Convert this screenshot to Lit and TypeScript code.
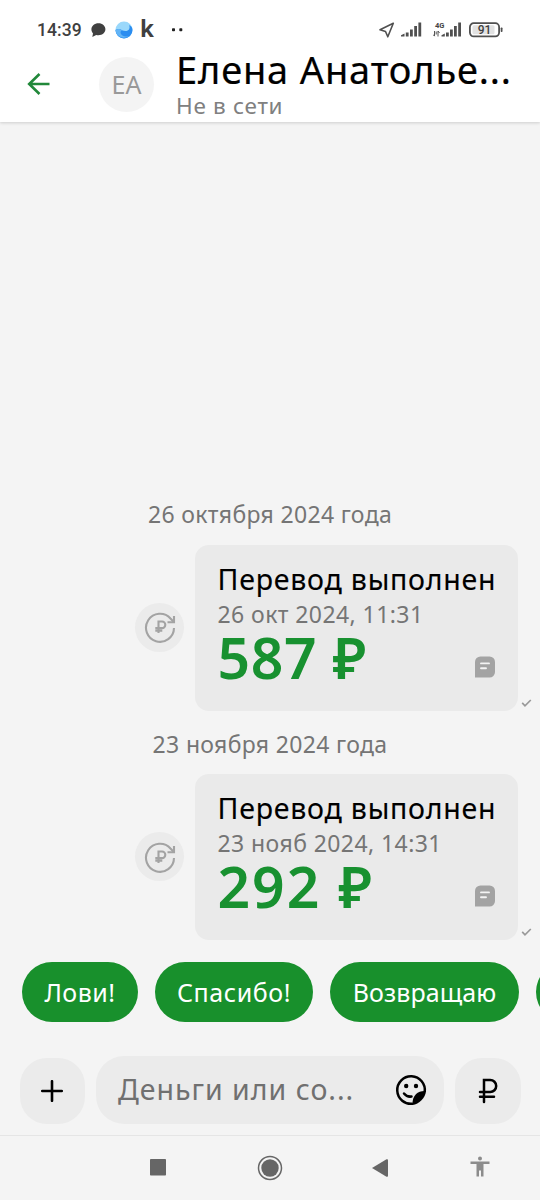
import { LitElement, html, css, svg } from "lit";
import { customElement, property } from "lit/decorators.js";

const rublePath = svg`<path d="M8 24V2h6.200a5.600 5.600 0 0 1 0 12H4M4 18.800h14"/>`;

@customElement("status-bar")
class StatusBar extends LitElement {
  static styles = css`
    :host { display: flex; height: 49px; padding-left: 37px; padding-right: 37px; box-sizing: border-box; align-items: center; color: #404040; padding-top: 11px; }
    .time { font: 500 17.5px/20px Roboto, sans-serif; width: 54px; letter-spacing: 0.1px; }
    svg { display: block; flex: none; }
    .chat { margin-right: 9px; }
    .orb { margin-right: 7px; }
    .k { font: 700 22.5px/24px "Noto Sans", sans-serif; width: 15px; margin-bottom: 3px; }
    .more { margin-left: 16px; }
    .push { margin-left: auto; margin-right: 6px; }
    .sig { margin-right: 11px; }
    .net { margin-right: 7px; }
    .num { font: 500 12px Roboto, sans-serif; }
    .tiny { font: 700 7.5px Roboto, sans-serif; }
  `;
  render() {
    return html`
      <span class="time">14:39</span>
      <svg class="chat" width="15" height="16" viewBox="0 0 15 16"><path fill="#404040" d="M7.500 1.300C11.500 1.300 14.400 4 14.400 7.200S11.500 13.200 7.500 13.200c-.9 0-1.500 0-2.300-.3L1.300 15l.7-3.600C1 10.200.4 8.900.4 7.200.4 4 3.500 1.300 7.500 1.300z"/></svg>
      <svg class="orb" width="18" height="18" viewBox="0 0 18 18">
        <circle cx="9" cy="9" r="8.500" fill="#9ad8fb"/>
        <path d="M.5 9c2-1.500 4.500-1.500 6.500.3 3 1.500 7 1 7.500-2.300.2-1.200 0-2-.5-3 2.300 1 3.500 2.800 3.500 5a8.500 8.500 0 0 1-17 0z" fill="#2b8df0"/>
        <path d="M.5 9c2-1.500 4.500-1.500 6.500.3-2 1-2 3.500.5 5.200 2 1.200 4.500 1.200 6.500.5A8.500 8.500 0 0 1 .5 9z" fill="#62b4f6"/>
      </svg>
      <span class="k">k</span>
      <svg class="more" width="13" height="4" viewBox="0 0 13 4"><rect x="1" y=".3" width="3" height="3" rx=".8" fill="#222"/><rect x="8.300" y=".3" width="3" height="3" rx=".8" fill="#222"/></svg>
      <svg class="push" width="17" height="16" viewBox="0 0 17 16"><path d="M15.300 1.300 2 7.800l5.500 1.700 2.300 5.300z" fill="none" stroke="#505050" stroke-width="1.600" stroke-linejoin="round"/></svg>
      <svg class="sig" width="21" height="16" viewBox="0 0 21 16"><path d="M0 14.500v-1.200l3.500-1.700v2.900zM4.800 10.500h2.800v4H4.800zM9 7.500h2.800v7H9zM13.200 4h2.800v10.500h-2.800zM17.400.5h2.800v14h-2.800z" fill="#505050"/></svg>
      <svg class="net" width="29" height="18" viewBox="0 0 29 18">
        <text class="tiny" x="2" y="6.800" fill="#444">4G</text>
        <path d="M1.500 10v5M0 13.500l1.500 1.700M5 15.500V10l1.500 2M3.200 10.500v3" fill="none" stroke="#555" stroke-width="1"/>
        <path d="M8.500 15.500v-1.200l3.300-1.700v2.900zM13 11.500h2.800v4H13zM17 8.500h2.800v7H17zM21 5h2.800v10.500H21zM25.200 1.500H28v14h-2.800z" fill="#505050"/>
      </svg>
      <svg width="34" height="16" viewBox="0 0 34 16">
        <rect x=".9" y="1.200" width="29.200" height="13.200" rx="3.800" fill="#fff" stroke="#505050" stroke-width="1.800"/>
        <rect x="3.500" y="3.300" width="22" height="9" rx="1.500" fill="#e2e2e2"/>
        <rect x="31.700" y="5.600" width="1.800" height="4.400" rx=".7" fill="#505050"/>
        <text class="num" x="15.500" y="12.100" text-anchor="middle" fill="#404040">91</text>
      </svg>`;
  }
}

@customElement("transfer-message")
class TransferMessage extends LitElement {
  @property() when = "";
  @property() amount = "";
  static styles = css`
    :host { display: flex; align-items: center; padding-left: 135px; height: 166px; }
    .repeat { width: 49px; height: 49px; border-radius: 50%; background: #ebebeb; display: grid; place-items: center; flex: none; margin-bottom: 1px; }
    .card { box-sizing: border-box; width: 323px; height: 166px; margin-left: 11px; background: #eaeaea; border-radius: 14px; padding: 16px 22px 0 22.5px; flex: none; }
    .title { font-size: 28.5px; line-height: 36px; color: #000; white-space: nowrap; letter-spacing: 0.78px; -webkit-text-stroke: 0.1px #000; }
    .when { font-size: 23px; line-height: 28px; margin-top: 3px; color: #757575; white-space: nowrap; letter-spacing: 0.42px; }
    .row { display: flex; justify-content: space-between; align-items: center; margin-top: -2px; height: 60px; }
    .amount { font-size: 57px; line-height: 60px; font-weight: 600; color: #189130; white-space: nowrap; letter-spacing: 0.6px; margin-top: 2px; }
    :host([wide]) .amount { letter-spacing: 2px; }
    .note { margin-top: 22px; margin-right: 1px; }
    .check { align-self: flex-end; margin: 0 0 3px 3px; flex: none; }
    svg { display: block; }
  `;
  render() {
    return html`
      <div class="repeat">
        <svg width="34" height="34" viewBox="0 0 34 34" fill="none" stroke="#a3a3a3" stroke-width="2.100">
          <path d="M31 18A14 14 0 1 1 27.500 8.500l2.800 3"/>
          <path d="M31 6v6.200h-6.500"/>
          <path d="M15.500 23V11.500h3.500a3.300 3.300 0 0 1 0 6.600h-6.700M12.300 20.600h7"/>
        </svg>
      </div>
      <div class="card">
        <div class="title">Перевод выполнен</div>
        <div class="when">${this.when}</div>
        <div class="row">
          <div class="amount">${this.amount} ₽</div>
          <svg class="note" width="20" height="22" viewBox="0 0 20 22"><path d="M0 21.500V6A5.500 5.500 0 0 1 5.500.5h9A5.500 5.500 0 0 1 20 6v10a5.500 5.500 0 0 1-5.500 5.500z" fill="#a3a3a3"/><path d="M6 7.400h8M6 12.300h5" stroke="#f4f4f4" stroke-width="1.900" stroke-linecap="round"/></svg>
        </div>
      </div>
      <svg class="check" width="11" height="10" viewBox="0 0 11 10"><path d="M1.200 4.800 4 7.800 9.800 2" fill="none" stroke="#999" stroke-width="1.700"/></svg>`;
  }
}

@customElement("app-root")
class AppRoot extends LitElement {
  static styles = css`
    :host { display: flex; flex-direction: column; width: 540px; height: 1200px; overflow: hidden; background: #f4f4f4; font-family: "Noto Sans", "Open Sans", sans-serif; }
    svg { display: block; flex: none; }
    .header { background: #fff; height: 122px; box-shadow: 0 1px 3px rgba(0,0,0,.16); flex: none; }
    .bar { display: flex; }
    .back { margin: 23px 0 0 27px; }
    .avatar { width: 55px; height: 55px; border-radius: 50%; background: #f4f4f4; color: #999; font-size: 25px; line-height: 54px; text-align: center; margin: 8px 0 0 49px; }
    .who { margin-left: 22px; white-space: nowrap; }
    .name { font-size: 38px; line-height: 40px; color: #000; letter-spacing: 0.85px; -webkit-text-stroke: 0.2px #000; }
    .state { font-size: 22.5px; line-height: 26px; margin-top: 4px; color: #808080; letter-spacing: 0.7px; }
    .feed { flex: 1; display: flex; flex-direction: column; justify-content: flex-end; }
    .day { text-align: center; font-size: 23px; line-height: 30px; color: #757575; white-space: nowrap; letter-spacing: 0.33px; }
    .d1 { margin-bottom: 15.500px; }
    .d2 { margin: 18px 0 15.500px; }
    .chips { display: flex; gap: 17px; padding-left: 22px; margin-top: 22px; height: 60px; flex: none; overflow: hidden; }
    .chip { box-sizing: border-box; height: 60px; border-radius: 30px; background: #18902c; color: #fff; font-size: 25px; line-height: 60px; text-align: center; flex: none; white-space: nowrap; }
    .c1 { width: 116px; letter-spacing: 0.5px; } .c2 { width: 158px; letter-spacing: 0.6px; } .c3 { width: 189px; letter-spacing: 0.1px; } .c4 { width: 116px; }
    .composer { display: flex; align-items: flex-end; padding: 0 19.500px; margin-top: 33.500px; height: 68.500px; flex: none; }
    .round { width: 65.500px; height: 66px; border-radius: 27px; background: #ebebeb; display: grid; place-items: center; flex: none; }
    .field { box-sizing: border-box; width: 348px; height: 68.500px; border-radius: 28px; background: #ebebeb; margin: 0 11px 0 11px; padding: 1px 17px 0 22px; display: flex; align-items: center; justify-content: space-between; color: #707070; font-size: 28.5px; white-space: nowrap; flex: none; }
    .hint { line-height: 64px; margin-bottom: 3px; letter-spacing: 1px; }
    .rub { margin-right: 2px; margin-bottom: 1px; }
    .nav { display: flex; align-items: center; border-top: 1px solid #e5e5e5; height: 65px; margin-top: 11px; flex: none; padding: 0 0 1px 150px; box-sizing: border-box; }
    .home { margin-left: 91px; }
    .prev { margin-left: 89px; }
    .access { margin-left: 81px; margin-bottom: 2px; }
  `;
  render() {
    return html`
      <div class="header">
        <status-bar></status-bar>
        <div class="bar">
          <svg class="back" width="23" height="24" viewBox="0 0 23 24"><path d="M12.500 2 2.200 12l10.300 10M2.500 12h20" fill="none" stroke="#21883a" stroke-width="2.600"/></svg>
          <div class="avatar">ЕА</div>
          <div class="who">
            <div class="name">Елена Анатолье...</div>
            <div class="state">Не в сети</div>
          </div>
        </div>
      </div>
      <div class="feed">
        <div class="day d1">26 октября 2024 года</div>
        <transfer-message when="26 окт 2024, 11:31" amount="587"></transfer-message>
        <div class="day d2">23 ноября 2024 года</div>
        <transfer-message wide when="23 нояб 2024, 14:31" amount="292"></transfer-message>
      </div>
      <div class="chips">
        <div class="chip c1">Лови!</div>
        <div class="chip c2">Спасибо!</div>
        <div class="chip c3">Возвращаю</div>
        <div class="chip c4"></div>
      </div>
      <div class="composer">
        <div class="round"><svg width="22" height="22" viewBox="0 0 22 22"><path d="M11 1.200v19.600M1.200 11h19.600" stroke="#000" stroke-width="2.600" stroke-linecap="round"/></svg></div>
        <div class="field">
          <span class="hint">Деньги или со...</span>
          <svg width="32" height="32" viewBox="0 0 32 32"><path d="M29.700 18A13.800 13.800 0 1 0 18 29.700" fill="none" stroke="#000" stroke-width="2.500"/><path d="M31 17c-7-.7-14 3-13.500 14C24 30 30.500 24 31 17z" fill="#000"/><circle cx="11.200" cy="12" r="2.200"/><circle cx="21" cy="12" r="2.200"/><path d="M9 19.500c2 2.500 4.500 3.500 7.500 3" fill="none" stroke="#000" stroke-width="2.500" stroke-linecap="round"/></svg>
        </div>
        <div class="round"><svg class="rub" width="22" height="26" viewBox="0 0 22 26" fill="none" stroke="#000" stroke-width="2.500" stroke-linecap="round">${rublePath}</svg></div>
      </div>
      <div class="nav">
        <svg width="16" height="17" viewBox="0 0 16 17"><rect width="16" height="16.500" rx=".8" fill="#666"/></svg>
        <svg class="home" width="26" height="26" viewBox="0 0 26 26"><circle cx="13" cy="13" r="11.500" fill="none" stroke="#666" stroke-width="1.500"/><circle cx="13" cy="13" r="8.700" fill="#666"/></svg>
        <svg class="prev" width="17" height="18" viewBox="0 0 17 18"><path d="M0 9 14.500.3q1.500-.6 1.500 1v15.400q0 1.600-1.500 1z" fill="#666"/></svg>
        <svg class="access" width="20" height="21" viewBox="0 0 20 21"><circle cx="10" cy="2.500" r="2" fill="#8c8c8c"/><path d="M.5 5.500h19v2.400h-6V20.500h-2.500v-6H9v6H6.500V7.900h-6z" fill="#8c8c8c"/></svg>
      </div>`;
  }
}
